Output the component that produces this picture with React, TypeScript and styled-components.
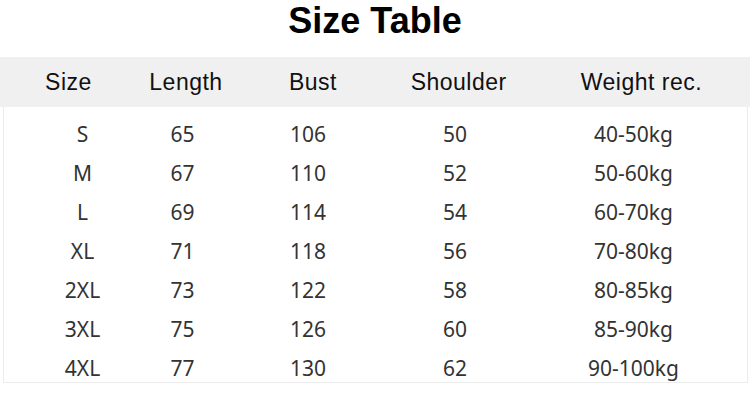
import React from 'react';
import styled, { createGlobalStyle } from 'styled-components';

const HEAD = ['Size', 'Length', 'Bust', 'Shoulder', 'Weight rec.'];

const ROWS = [
  ['S', '65', '106', '50', '40-50kg'],
  ['M', '67', '110', '52', '50-60kg'],
  ['L', '69', '114', '54', '60-70kg'],
  ['XL', '71', '118', '56', '70-80kg'],
  ['2XL', '73', '122', '58', '80-85kg'],
  ['3XL', '75', '126', '60', '85-90kg'],
  ['4XL', '77', '130', '62', '90-100kg'],
];

const GlobalStyle = createGlobalStyle`
  html, body {
    margin: 0;
    padding: 0;
    background: #ffffff;
  }
  body {
    width: 750px;
    height: 410px;
    overflow: hidden;
  }
`;

export default function App() {
  return (
    <>
      <GlobalStyle />
      <Page>
        <Title>Size Table</Title>
        <HeaderBand>
          {HEAD.map((h) => (
            <HeadCell key={h}>{h}</HeadCell>
          ))}
        </HeaderBand>
        <TableBody>
          {ROWS.map((row) => (
            <Row key={row[0]}>
              {row.map((cell, i) => (
                <Cell key={i}>{cell}</Cell>
              ))}
            </Row>
          ))}
        </TableBody>
      </Page>
    </>
  );
}

const Page = styled.div`
  width: 750px;
  height: 410px;
  display: flex;
  flex-direction: column;
  background: #ffffff;
`;

const Title = styled.h1`
  margin: 0 0 16px;
  height: 41px;
  line-height: 41px;
  text-align: center;
  font-family: 'Liberation Sans', Arial, sans-serif;
  font-size: 36px;
  font-weight: 700;
  color: #000000;
`;

const HeaderBand = styled.div`
  height: 50px;
  display: grid;
  grid-template-columns: 123.8px 111.2px 142.8px 148.6px 217px;
  padding-left: 6.6px;
  align-items: center;
  background: #f0f0f0;
`;

const HeadCell = styled.div`
  text-align: center;
  line-height: 50px;
  font-family: 'Liberation Sans', Arial, sans-serif;
  font-size: 23px;
  letter-spacing: 0.5px;
  color: #111111;
  white-space: nowrap;
`;

const TableBody = styled.div`
  margin: 0 2px 0 3px;
  padding-top: 2px;
  border: 1px solid #ececec;
  border-top: none;
  display: flex;
  flex-direction: column;
`;

const Row = styled.div`
  height: 39px;
  box-sizing: border-box;
  padding: 12px 0 0 19px;
  display: grid;
  grid-template-columns: 119px 81px 170px 124px 233px;
  align-items: start;
`;

const Cell = styled.div`
  text-align: center;
  line-height: 26px;
  font-family: 'Noto Sans', 'Open Sans', sans-serif;
  font-size: 21px;
  color: #333333;
  white-space: nowrap;
`;
